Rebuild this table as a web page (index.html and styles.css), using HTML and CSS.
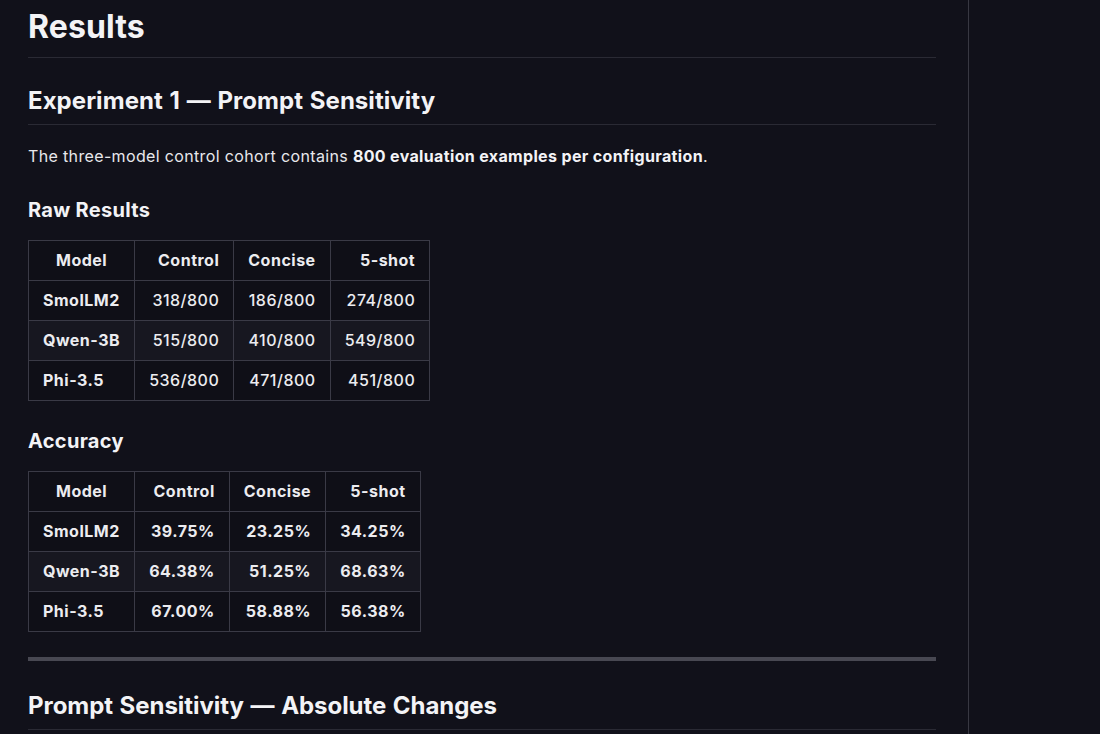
FILE: index.html
```html
<!DOCTYPE html>
<html lang="en">
<head>
<meta charset="utf-8">
<title>Results</title>
<link rel="stylesheet" href="styles.css">
</head>
<body>
<div class="layout">
  <main class="doc">
    <h1 class="h1">Results</h1>
    <h2 class="h2 first">Experiment 1 — Prompt Sensitivity</h2>
    <p class="para">The three-model control cohort contains <strong>800 evaluation examples per configuration</strong>.</p>

    <h3 class="h3 raw">Raw Results</h3>
    <table class="tbl">
      <thead>
        <tr><th>Model</th><th class="r">Control</th><th class="r">Concise</th><th class="r">5-shot</th></tr>
      </thead>
      <tbody>
        <tr><td class="model">SmolLM2</td><td class="r">318/800</td><td class="r">186/800</td><td class="r">274/800</td></tr>
        <tr><td class="model">Qwen-3B</td><td class="r">515/800</td><td class="r">410/800</td><td class="r">549/800</td></tr>
        <tr><td class="model">Phi-3.5</td><td class="r">536/800</td><td class="r">471/800</td><td class="r">451/800</td></tr>
      </tbody>
    </table>

    <h3 class="h3 acc">Accuracy</h3>
    <table class="tbl pct">
      <thead>
        <tr><th>Model</th><th class="r">Control</th><th class="r">Concise</th><th class="r">5-shot</th></tr>
      </thead>
      <tbody>
        <tr><td class="model">SmolLM2</td><td class="r">39.75%</td><td class="r">23.25%</td><td class="r">34.25%</td></tr>
        <tr><td class="model">Qwen-3B</td><td class="r">64.38%</td><td class="r">51.25%</td><td class="r">68.63%</td></tr>
        <tr><td class="model">Phi-3.5</td><td class="r">67.00%</td><td class="r">58.88%</td><td class="r">56.38%</td></tr>
      </tbody>
    </table>

    <hr class="rule">

    <h2 class="h2 second">Prompt Sensitivity — Absolute Changes</h2>
  </main>
  <aside class="side"></aside>
</div>
</body>
</html>
```

FILE: styles.css
```css
html, body {
  margin: 0;
  padding: 0;
  background: #11111a;
  height: 100%;
  overflow: hidden;
}

body {
  font-family: Inter, "Liberation Sans", sans-serif;
  color: #e8e8ec;
  font-size: 16px;
  line-height: 24px;
}

.layout {
  display: flex;
  height: 734px;
}

.doc {
  width: 908px;
  padding: 7px 32px 0 28px;
  border-right: 1px solid #383842;
  flex: none;
}

.side {
  flex: 1;
}

.h1 {
  margin: 0;
  font-size: 32px;
  line-height: 40px;
  font-weight: 700;
  color: #f3f3f6;
  padding-bottom: 10px;
  border-bottom: 1px solid #2a2a34;
  letter-spacing: 0.1px;
}

.h2 {
  margin: 0;
  font-size: 24px;
  line-height: 30px;
  font-weight: 700;
  color: #f3f3f6;
  padding-bottom: 8px;
  border-bottom: 1px solid #2a2a34;
  letter-spacing: 0.05px;
  word-spacing: 1px;
}

.h2.first {
  margin-top: 28px;
}

.h2.second {
  margin-top: 30px;
  letter-spacing: -0.05px;
}

.para {
  margin: 19px 0 0;
  letter-spacing: 0.35px;
}

.para strong {
  font-weight: 700;
  color: #f3f3f6;
}

.h3 {
  margin: 0;
  font-size: 20px;
  line-height: 25px;
  font-weight: 700;
  color: #f3f3f6;
  letter-spacing: 0.3px;
}

.h3.raw {
  margin-top: 30px;
}

.h3.acc {
  margin-top: 28px;
}

.tbl {
  border-collapse: collapse;
  margin-top: 17px;
  color: #ececf0;
  letter-spacing: 0.5px;
}

.tbl th,
.tbl td {
  border: 1px solid #3a3a46;
  padding: 7px 14px 8px;
  line-height: 24px;
  white-space: nowrap;
}

.tbl th {
  font-weight: 700;
  text-align: center;
}

.tbl td {
  font-weight: 500;
  text-align: left;
}

.tbl td.model {
  font-weight: 700;
}

.tbl.pct td {
  font-weight: 700;
}

.tbl .r {
  text-align: right;
}

.tbl thead tr,
.tbl tbody tr:nth-child(odd) {
  background: #0f0f17;
}

.tbl tbody tr:nth-child(even) {
  background: #171720;
}

.rule {
  margin: 25px 0 0;
  height: 4px;
  border: 0;
  background: #484852;
}
```
